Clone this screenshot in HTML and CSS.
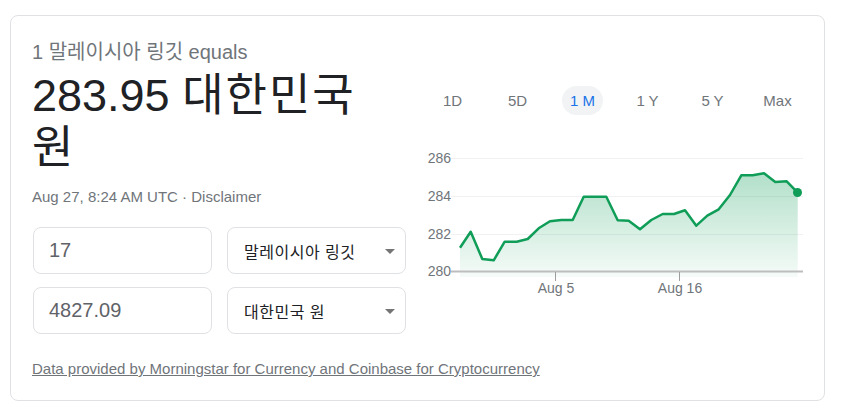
FILE: index.html
```html
<!DOCTYPE html>
<html lang="ko">
<head>
<meta charset="utf-8">
<title>Currency converter</title>
<link rel="stylesheet" href="styles.css">
</head>
<body>
<div class="card">
  <div class="top">
    <div class="left">
      <div class="equals">1 말레이시아 링깃 equals</div>
      <div class="result">283.95 <span class="ko">대한민국</span> <span class="ko">원</span></div>
      <div class="date">Aug 27, 8:24 AM UTC · <span>Disclaimer</span></div>
      <div class="form">
        <div class="field num">17</div>
        <div class="field sel"><span>말레이시아 링깃</span><i class="arrow"></i></div>
        <div class="field num">4827.09</div>
        <div class="field sel"><span>대한민국 원</span><i class="arrow"></i></div>
      </div>
    </div>
    <div class="right">
      <div class="ranges">
        <div class="range"><span>1D</span></div>
        <div class="range"><span>5D</span></div>
        <div class="range"><span class="active">1 M</span></div>
        <div class="range"><span>1 Y</span></div>
        <div class="range"><span>5 Y</span></div>
        <div class="range"><span>Max</span></div>
      </div>
      <svg class="chart" width="390" height="160" viewBox="420 140 390 160">
        <defs>
          <linearGradient id="fill" x1="0" y1="0" x2="0" y2="1">
            <stop offset="0" stop-color="#0f9d58" stop-opacity="0.32"/>
            <stop offset="1" stop-color="#0f9d58" stop-opacity="0.04"/>
          </linearGradient>
        </defs>
        <g class="grid">
          <line x1="451" y1="158.5" x2="803" y2="158.5"/>
          <line x1="451" y1="196.5" x2="803" y2="196.5"/>
          <line x1="451" y1="234.5" x2="803" y2="234.5"/>
        </g>
        <polygon fill="url(#fill)" points="460,277 460,247.7 470.7,231.7 482.3,259 493.7,260.3 504.7,241.7 516.7,241.7 527.7,239 538.7,228.3 550,221.3 561.3,220 572.7,220 583.7,196.7 595,196.7 606.3,196.7 617.7,220.3 628.7,220.7 640,229.3 651.3,220 662.7,214 674,214 685,210.3 696.3,225.7 707.3,215.7 718.7,209.3 730,195 741.3,175.3 752.7,175.3 764,173.3 775.3,182 786.7,181.3 797.7,192.7 797.7,277"/>
        <line class="axis" x1="451" y1="271.5" x2="803" y2="271.5"/>
        <line class="tick" x1="555.5" y1="272" x2="555.5" y2="281"/>
        <line class="tick" x1="679.5" y1="272" x2="679.5" y2="281"/>
        <polyline class="line" points="460,247.7 470.7,231.7 482.3,259 493.7,260.3 504.7,241.7 516.7,241.7 527.7,239 538.7,228.3 550,221.3 561.3,220 572.7,220 583.7,196.7 595,196.7 606.3,196.7 617.7,220.3 628.7,220.7 640,229.3 651.3,220 662.7,214 674,214 685,210.3 696.3,225.7 707.3,215.7 718.7,209.3 730,195 741.3,175.3 752.7,175.3 764,173.3 775.3,182 786.7,181.3 797.7,192.7"/>
        <circle cx="797.5" cy="192.5" r="4.5" fill="#0f9d58"/>
        <g class="ylab">
          <text x="451" y="163">286</text>
          <text x="451" y="201">284</text>
          <text x="451" y="239">282</text>
          <text x="451" y="276">280</text>
        </g>
        <g class="xlab">
          <text x="556" y="293">Aug 5</text>
          <text x="680" y="293">Aug 16</text>
        </g>
      </svg>
    </div>
  </div>
  <a class="source" href="#">Data provided by Morningstar for Currency and Coinbase for Cryptocurrency</a>
</div>
</body>
</html>
```

FILE: styles.css
```css
* { box-sizing: border-box; }
body {
  margin: 0;
  background: #fff;
  font-family: "Liberation Sans", Arial, "Noto Sans CJK KR", sans-serif;
}
.card {
  margin: 15px 0 0 10px;
  width: 815px;
  height: 386px;
  border: 1px solid #dfe1e5;
  border-radius: 8px;
  padding: 24px 13px 0 21px;
}
.top {
  display: flex;
  gap: 14px;
}
.left {
  width: 374px;
}
.equals {
  font-size: 20px;
  line-height: 24px;
  height: 24px;
  color: #70757a;
}
.result {
  margin-top: 6px;
  width: 350px;
  font-size: 45px;
  line-height: 52px;
  height: 104px;
  color: #202124;
}
.result .ko {
  letter-spacing: 2px;
}
.date {
  margin-top: 13px;
  font-size: 15px;
  line-height: 20px;
  color: #70757a;
}
.form {
  margin: 20px 0 0 1px;
  display: grid;
  grid-template-columns: 179px 179px;
  grid-auto-rows: 47px;
  column-gap: 15px;
  row-gap: 13px;
}
.field {
  border: 1px solid #dfe1e5;
  border-radius: 8px;
  display: flex;
  align-items: center;
}
.num {
  padding-left: 15px;
  font-size: 20px;
  color: #5f6368;
}
.sel {
  padding: 0 10px 0 16px;
  font-size: 16px;
  color: #202124;
  justify-content: space-between;
}
.sel span {
  letter-spacing: 0.5px;
}
.arrow {
  width: 0;
  height: 0;
  border-left: 5px solid transparent;
  border-right: 5px solid transparent;
  border-top: 5px solid #757575;
  margin-top: 2px;
}
.right {
  width: 390px;
  padding-top: 46px;
}
.ranges {
  display: flex;
}
.range {
  width: 65px;
  height: 29px;
  display: flex;
  justify-content: center;
  align-items: center;
  font-size: 15px;
  color: #70757a;
}
.range span {
  padding: 0 8px;
  line-height: 29px;
  border-radius: 15px;
}
.range .active {
  background: #f1f3f4;
  color: #1a73e8;
}
.chart {
  display: block;
  margin-top: 25px;
}
.grid line { stroke: #f1f1f1; stroke-width: 1; }
.axis { stroke: #bdbdbd; stroke-width: 2; }
.tick { stroke: #9e9e9e; stroke-width: 1; }
.line {
  fill: none;
  stroke: #0f9d58;
  stroke-width: 2.5;
  stroke-linejoin: round;
}
.ylab text {
  font-family: "Liberation Sans", Arial, sans-serif;
  font-size: 14px;
  fill: #70757a;
  text-anchor: end;
}
.xlab text {
  font-family: "Liberation Sans", Arial, sans-serif;
  font-size: 14px;
  fill: #70757a;
  text-anchor: middle;
}
.source {
  display: block;
  margin-top: 25px;
  font-size: 15px;
  line-height: 20px;
  color: #70757a;
}
```
